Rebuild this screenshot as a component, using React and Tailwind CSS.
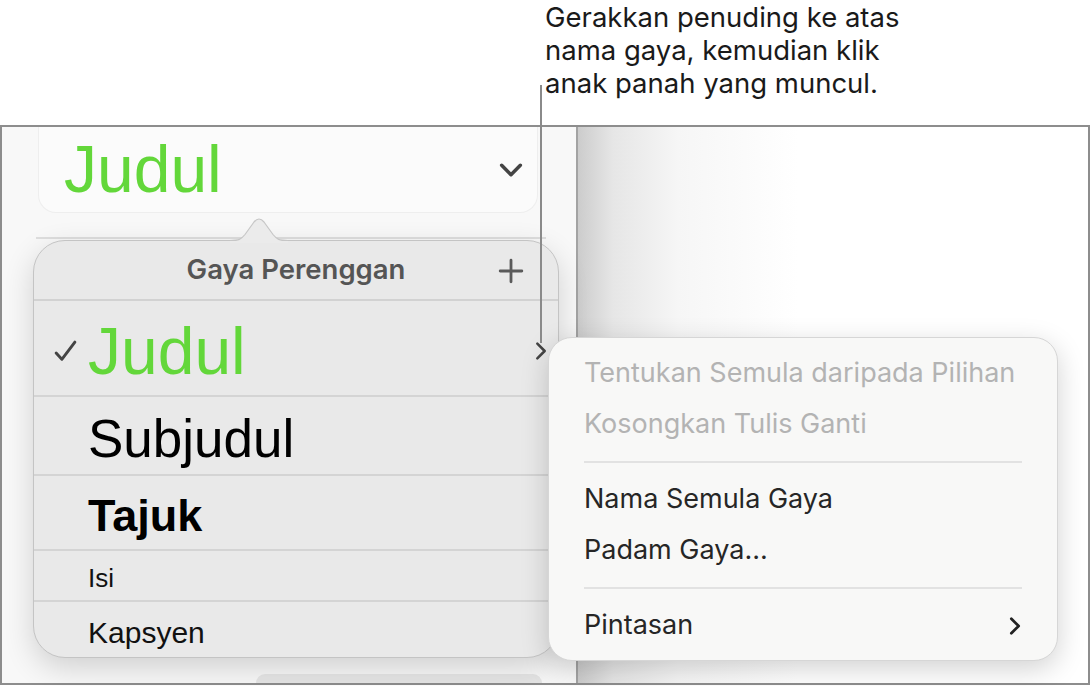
import React from 'react';

const sans = { fontFamily: 'Inter, "Noto Sans", sans-serif' };
const helv = { fontFamily: '"Liberation Sans", Arial, sans-serif' };

const Chevron = ({ dir = 'right', className = '', width = 3 }) => (
  <svg viewBox="0 0 24 24" className={className} fill="none" stroke="currentColor" strokeWidth={width} strokeLinecap="round" strokeLinejoin="round">
    {dir === 'right' ? <path d="M8 4l8 8-8 8" /> : <path d="M4 8l8 8 8-8" />}
  </svg>
);

const styles = [
  { name: 'Judul', h: 'h-[96px]', cls: 'text-[66px] text-[#63d73a]', checked: true },
  { name: 'Subjudul', h: 'h-[79px]', cls: 'text-[53px] text-black' },
  { name: 'Tajuk', h: 'h-[75px]', cls: 'text-[45px] font-bold text-black' },
  { name: 'Isi', h: 'h-[51px]', cls: 'text-[26px] text-[#111]' },
  { name: 'Kapsyen', h: 'h-[56px]', cls: 'text-[30px] text-[#111]' },
];

const menuItems = [
  { label: 'Tentukan Semula daripada Pilihan', disabled: true },
  { label: 'Kosongkan Tulis Ganti', disabled: true },
  { divider: true },
  { label: 'Nama Semula Gaya' },
  { label: 'Padam Gaya...' },
  { divider: true },
  { label: 'Pintasan', submenu: true },
];

export default function App() {
  return (
    <div className="relative w-[1091px] h-[686px] bg-white overflow-hidden" style={sans}>
      {/* Callout */}
      <div className="h-[125px] pl-[545px] pt-[1px] text-[27.5px] leading-[33px] text-[#1a1a1a]">
        <p>Gerakkan penuding ke atas</p>
        <p>nama gaya, kemudian klik</p>
        <p>anak panah yang muncul.</p>
      </div>

      {/* Screenshot frame */}
      <div className="relative h-[560px] w-[1090px] border-2 border-[#8d8d8d] flex">
        <div className="relative w-[576px] bg-[#f8f8f8] border-r-2 border-[#a3a3a3]">
          <div className="ml-[36px] w-[500px] h-[86px] bg-[#fbfbfb] rounded-b-[18px] border border-t-0 border-[#eeeeee] flex items-center justify-between pl-[25px] pr-[12px]">
            <span className="text-[66px] leading-none text-[#63d73a] pb-[2px]" style={helv}>Judul</span>
            <Chevron dir="down" className="w-[28px] h-[28px] text-[#444]" />
          </div>
          <div className="mt-[24px] ml-[34px] w-[510px] h-[2px] bg-[#dedede]" />
          <div className="absolute left-[254px] bottom-0 w-[286px] h-[9px] rounded-t-[12px] bg-[#e6e6e6]" />
        </div>
        <div className="flex-1 bg-[linear-gradient(to_right,#cccccc_0px,#e6e6e6_35px,#f6f6f6_100px,#ffffff_220px)]" />

        {/* Paragraph styles popover */}
        <svg className="absolute left-[228px] top-[90px] z-20" width="58" height="26" viewBox="0 0 58 26">
          <path d="M0 23.5 C9 23.5 11 22.5 15 17.5 L24 5 Q29 -1 34 5 L43 17.5 C47 22.5 49 23.5 58 23.5 L58 26 L0 26 Z" fill="#ebebeb" />
          <path d="M0 23.5 C9 23.5 11 22.5 15 17.5 L24 5 Q29 -1 34 5 L43 17.5 C47 22.5 49 23.5 58 23.5" fill="none" stroke="#c6c6c6" strokeWidth="1.2" />
        </svg>
        <div className="absolute left-[31px] top-[113px] w-[526px] h-[418px] rounded-[32px] bg-[#e9e9e9] border border-[#c4c4c4] shadow-[0_10px_30px_rgba(0,0,0,0.16)] overflow-hidden z-10">
          <div className="relative h-[60px] flex items-center justify-center border-b-2 border-[#d2d2d2]">
            <span className="text-[27.5px] font-semibold text-[#555]">Gaya Perenggan</span>
            <svg viewBox="0 0 24 24" className="absolute right-[34px] top-[17px] w-[26px] h-[26px]" fill="none" stroke="#5a5a5a" strokeWidth="2.6" strokeLinecap="round">
              <path d="M12 2v20M2 12h20" />
            </svg>
          </div>
          {styles.map((s, i) => (
            <div key={s.name} className={`relative ${s.h} flex items-center pl-[54px] pt-[5px] ${i < styles.length - 1 ? 'border-b-2 border-[#d4d4d4]' : ''}`}>
              {s.checked && (
                <svg viewBox="0 0 24 24" className="absolute left-[19px] top-[38px] w-[25px] h-[25px]" fill="none" stroke="#444" strokeWidth="2.8" strokeLinecap="round" strokeLinejoin="round">
                  <path d="M3 13.5l5.5 6L21 3" />
                </svg>
              )}
              <span className={`${s.cls} leading-none`} style={helv}>{s.name}</span>
              {s.checked && <Chevron width={2.8} className="absolute right-[6px] top-[39px] w-[22px] h-[22px] text-[#444]" />}
            </div>
          ))}
        </div>

        {/* Context menu */}
        <div className="absolute left-[546px] top-[210px] w-[510px] h-[324px] rounded-[24px] bg-[#f8f8f7] border border-[#d6d6d6] shadow-[0_8px_28px_rgba(0,0,0,0.18)] z-30 px-[35px] pt-[10px]">
          {menuItems.map((m, i) =>
            m.divider ? (
              <div key={i} className="my-[11px] h-[2px] bg-[#e2e2e2]" />
            ) : (
              <div key={i} className={`h-[51px] flex items-center justify-between text-[27px] ${m.disabled ? 'text-[#b3b3b3]' : 'text-[#262626]'}`}>
                <span>{m.label}</span>
                {m.submenu && <Chevron className="w-[22px] h-[22px] text-[#222] mr-[-4px]" />}
              </div>
            )
          )}
        </div>
      </div>

      {/* Callout leader line */}
      <div className="absolute left-[540px] top-[85px] w-[2px] h-[258px] bg-[#8a8a8a] z-40" />
    </div>
  );
}
